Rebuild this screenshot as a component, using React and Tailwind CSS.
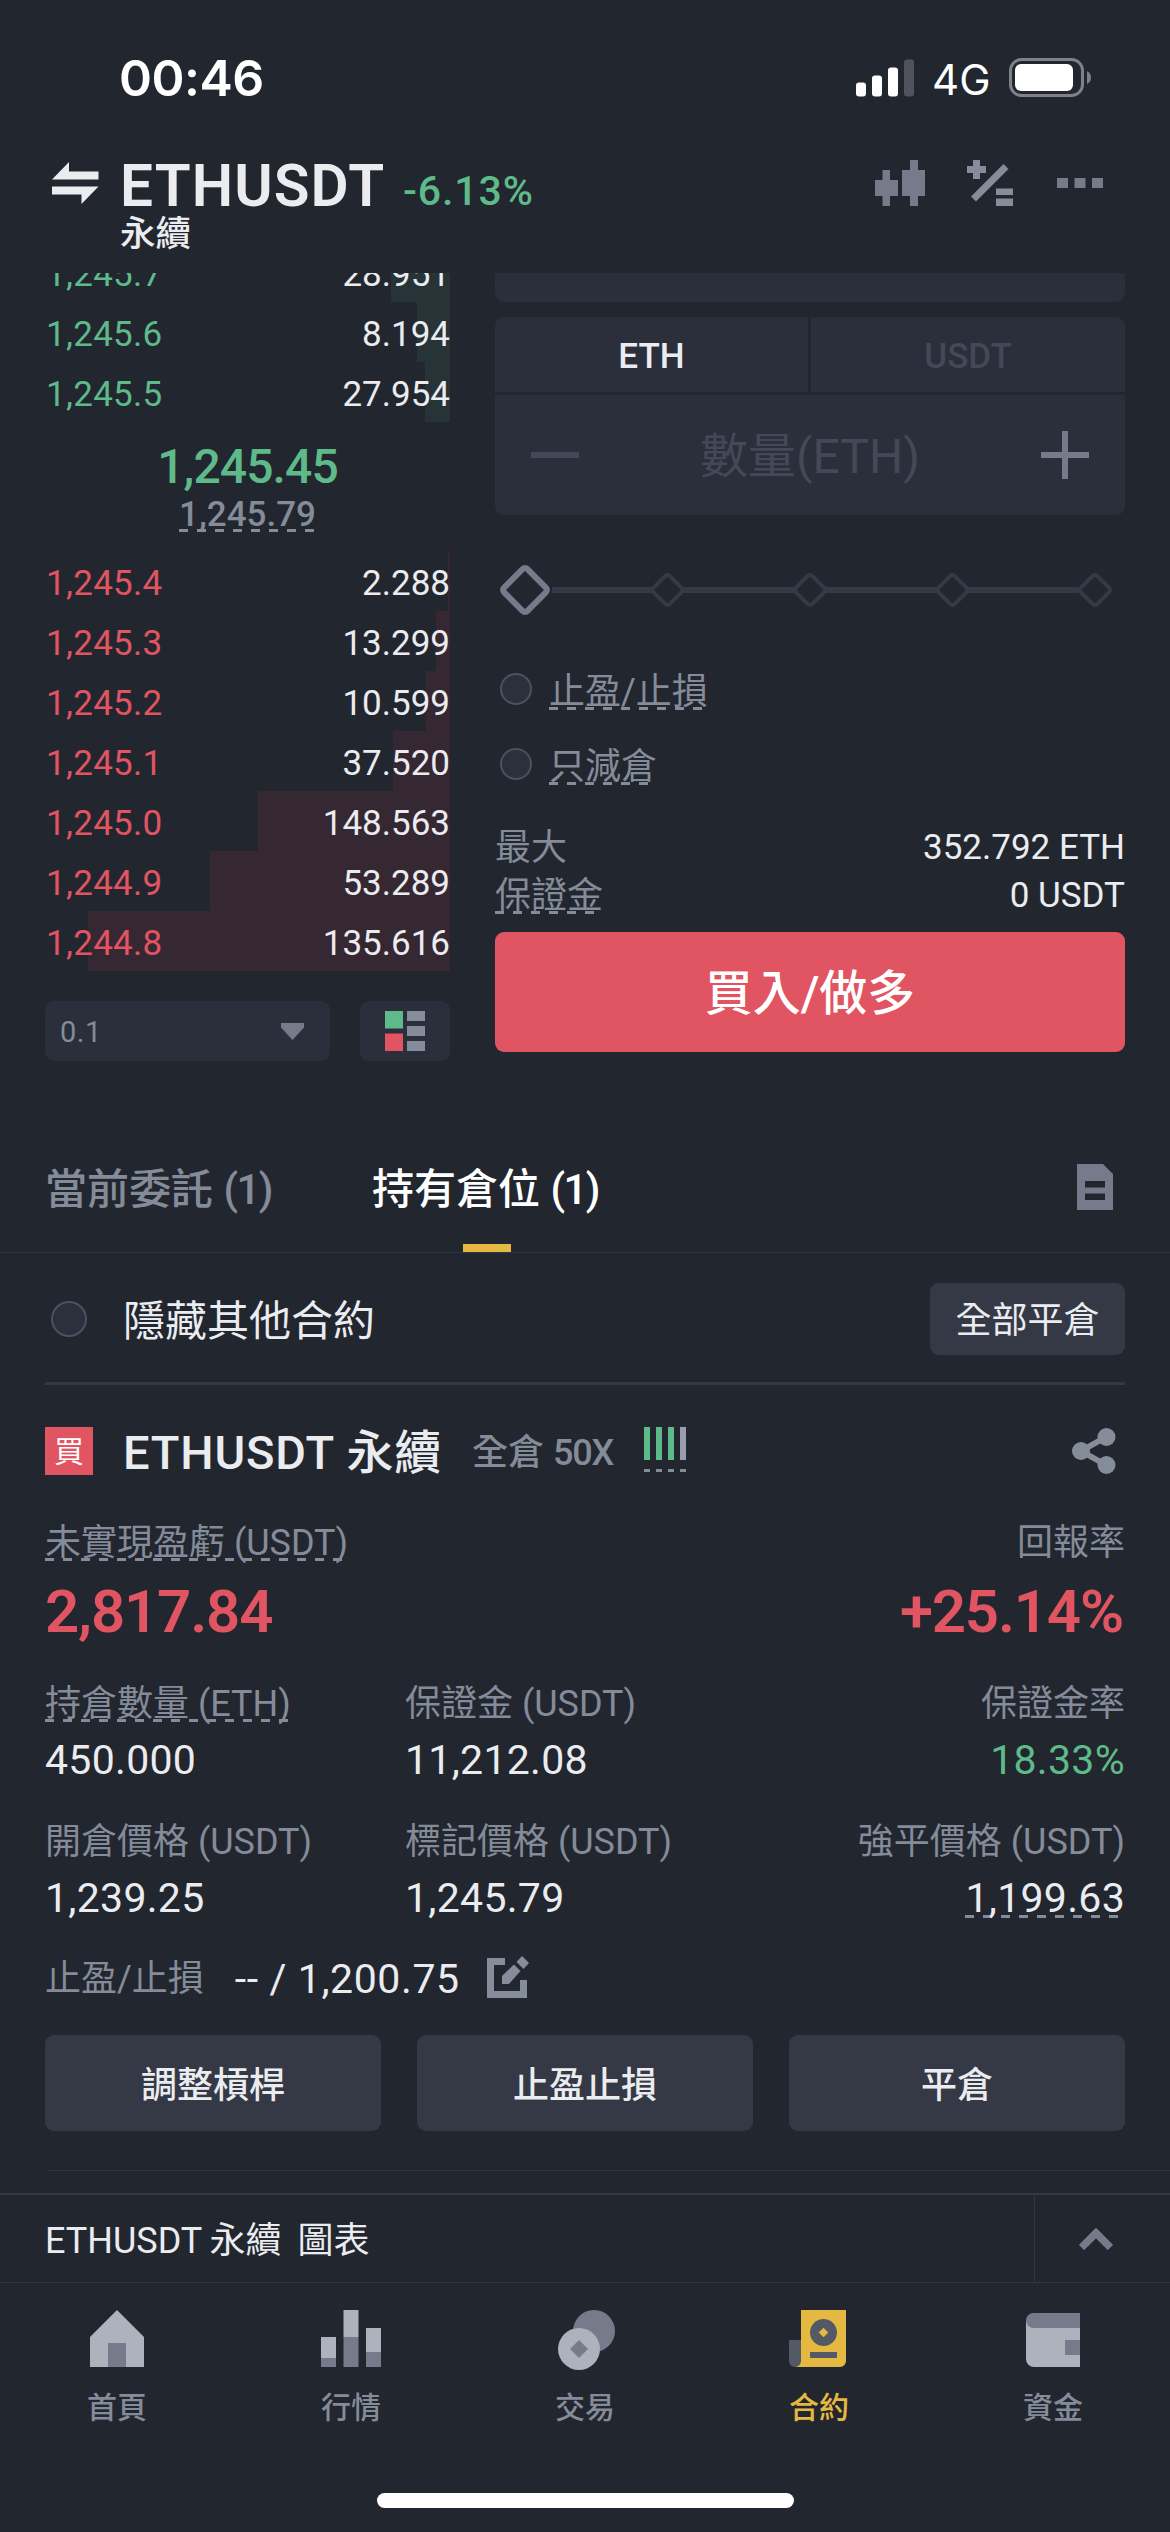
const BIDS = [
  { price: "1,245.7", amount: "28.951", depth: 59 },
  { price: "1,245.6", amount: "8.194", depth: 33 },
  { price: "1,245.5", amount: "27.954", depth: 25 },
];

const ASKS = [
  { price: "1,245.4", amount: "2.288", depth: 2 },
  { price: "1,245.3", amount: "13.299", depth: 14 },
  { price: "1,245.2", amount: "10.599", depth: 24 },
  { price: "1,245.1", amount: "37.520", depth: 57 },
  { price: "1,245.0", amount: "148.563", depth: 192 },
  { price: "1,244.9", amount: "53.289", depth: 240 },
  { price: "1,244.8", amount: "135.616", depth: 362 },
];

const NAV = [
  { label: "首頁", icon: HomeIcon },
  { label: "行情", icon: MarketIcon },
  { label: "交易", icon: TradeIcon },
  { label: "合約", icon: FuturesIcon, active: true },
  { label: "資金", icon: WalletIcon },
];

function HomeIcon() {
  return (
    <svg width="60" height="60" viewBox="0 0 60 60">
      <path d="M30 0L57 27V57H3V27Z" fill="#aeb2bc" />
      <path d="M21 33h18v24H21z" fill="#757b8a" />
    </svg>
  );
}

function MarketIcon() {
  return (
    <svg width="60" height="60" viewBox="0 0 60 60">
      <path d="M0 27h15v21H0zM22.5 0h15v27h-15zM45 18h15v24H45z" fill="#aeb2bc" />
      <path d="M0 48h15v9H0zM22.5 27h15v30h-15zM45 42h15v15H45z" fill="#757b8a" />
    </svg>
  );
}

function TradeIcon() {
  return (
    <svg width="60" height="60" viewBox="0 0 60 60">
      <circle cx="39" cy="21" r="21" fill="#757b8a" />
      <circle cx="24" cy="39" r="21" fill="#aeb2bc" />
      <path d="M24 30l9 9-9 9-9-9z" fill="#757b8a" />
    </svg>
  );
}

function FuturesIcon() {
  return (
    <svg width="60" height="60" viewBox="0 0 60 60">
      <path d="M12 0h45v51a6 6 0 0 1-6 6H6l6-6z" fill="#e5b941" />
      <path d="M0 30h12v21a6 6 0 0 1-12 0z" fill="#535965" />
      <circle cx="34.5" cy="22.5" r="13.5" fill="#535965" />
      <path d="M34.5 17.700l4.800 4.800-4.800 4.800-4.800-4.800z" fill="#e5b941" />
      <path d="M21 42h27v6H21z" fill="#535965" />
    </svg>
  );
}

function WalletIcon() {
  return (
    <svg width="60" height="60" viewBox="0 0 60 60">
      <path d="M3 10h54v47H11a8 8 0 0 1-8-8z" fill="#aeb2bc" />
      <path d="M10.5 3H57v15H10.5a7.5 7.5 0 0 1 0-15z" fill="#757b8a" />
      <path d="M42 30h15v15H42z" fill="#757b8a" />
    </svg>
  );
}

// text with the app's "tap for help" dashed underline
function Hint({ children, className = "leading-[36px]" }) {
  return (
    <span
      className={`inline-block bg-[repeating-linear-gradient(90deg,#848b99_0,#848b99_9px,transparent_9px,transparent_18px)] bg-[length:100%_3px] bg-bottom bg-no-repeat ${className}`}
    >
      {children}
    </span>
  );
}

function StatusBar() {
  return (
    <div className="h-[156px] flex items-start justify-between pl-[119px] pr-[78px] text-white">
      <span className="mt-[48px] h-[60px] leading-[60px] text-[50px] font-semibold tracking-[-0.5px] font-['Inter']">00:46</span>
      <div className="mt-[48px] h-[60px] flex items-center">
        <svg width="58" height="38" viewBox="0 0 58 38" fill="#fff">
          <rect x="0" y="23.5" width="10" height="14" rx="3" />
          <rect x="16" y="16.5" width="10" height="21" rx="3" />
          <rect x="32" y="8.5" width="10" height="29" rx="3" />
          <rect x="48" y="0.5" width="10" height="37" rx="3" fill="#50535b" />
        </svg>
        <span className="ml-[18px] w-[58px] text-[42px] leading-[60px] font-['Inter'] pt-[3px]">4G</span>
        <svg className="ml-[19px]" width="83" height="40" viewBox="0 0 83 40">
          <rect x="1.5" y="1.5" width="72" height="36" rx="11" fill="none" stroke="#7f8187" strokeWidth="3" />
          <rect x="6" y="6" width="58" height="27" rx="6" fill="#fff" />
          <path d="M78 13q4 2 4 6.5t-4 6.5z" fill="#7f8187" />
        </svg>
      </div>
    </div>
  );
}

function Header() {
  return (
    <header className="h-[117px] flex pl-[45px] pr-[67px] text-[#ebecf0]">
      <svg className="mt-[6px] ml-[7px]" width="47" height="42" viewBox="0 0 47 42" fill="#ebecf0">
        <path d="M17 0v9.5h29.5v8H0z" />
        <path d="M0 24.5h46.5L29.5 42v-9.5H0z" />
      </svg>
      <div className="ml-[21px] flex flex-col">
        <div className="flex">
          <span className="h-[60px] leading-[60px] w-[283px] text-[58.5px] font-semibold tracking-[1.1px]">ETHUSDT</span>
          <span className="pt-[9px] leading-[52px] text-[41px] font-medium tracking-[0.9px] text-[#5fba89]">-6.13%</span>
        </div>
        <span className="text-[35.5px] leading-[34px] font-medium">永續</span>
      </div>
      <div className="ml-auto mt-[4px] flex">
        <svg width="50" height="46" viewBox="0 0 50 46" fill="#757b8a">
          <path d="M0 20h7.5V10H15v10h8v16h-8v10H7.5V36H0z" />
          <path d="M27 10h8V0h8v10h7v26h-7v10h-8V36h-8z" />
        </svg>
        <svg className="ml-[42px]" width="46" height="46" viewBox="0 0 46 46" fill="#858c9a">
          <path d="M6 0h7v6h6v7h-6v6H6v-6H0V6h6z" />
          <path d="M36.5 4l5 5L9 41.500l-5-5z" />
          <path d="M29 28.5h17V35H29zM29 38.5h17V46H29z" />
        </svg>
        <svg className="mt-[18px] ml-[44px]" width="46" height="10" viewBox="0 0 46 10" fill="#757b8a">
          <path d="M0 0h11v10H0zM17.5 0h11v10h-11zM35 0h11v10H35z" />
        </svg>
      </div>
    </header>
  );
}

function BookRow({ row, side }) {
  return (
    <div className="h-[60px] shrink-0 grid">
      <div
        className={`col-start-1 row-start-1 justify-self-end ${side === "bid" ? "bg-[#263337]" : "bg-[#352833]"}`}
        style={{ width: row.depth }}
      />
      <div className="col-start-1 row-start-1 flex justify-between pt-[6px] leading-[54px] text-[35px]">
        <span className={`ml-px tracking-[0.3px] ${side === "bid" ? "text-[#5fba89]" : "text-[#e15461]"}`}>{row.price}</span>
        <span className="text-[#ebecf0]">{row.amount}</span>
      </div>
    </div>
  );
}

function OrderBook() {
  return (
    <div className="w-[405px]">
      <div className="h-[149px] overflow-hidden flex flex-col justify-end">
        {BIDS.map((row) => (
          <BookRow key={row.price} row={row} side="bid" />
        ))}
      </div>
      <div className="h-[129px] pt-[20px] flex flex-col items-center">
        <span className="h-[54px] leading-[50px] text-[48px] font-medium tracking-[-0.9px] text-[#5fba89]">1,245.45</span>
        <Hint className="leading-[37px] h-[36px] text-[35px] font-medium text-[#848b99]">1,245.79</Hint>
      </div>
      {ASKS.map((row) => (
        <BookRow key={row.price} row={row} side="ask" />
      ))}
      <div className="mt-[30px] flex justify-between">
        <div className="w-[285px] h-[60px] rounded-[9px] bg-[#2a2f3b] flex items-center justify-between pl-[15px] pr-[26px] text-[29px] tracking-[0.5px] text-[#848b99]">
          <span className="pt-[4px]">0.1</span>
          <svg width="23" height="17" viewBox="0 0 23 17">
            <path d="M0 0h23v4.5L11.5 17 0 4.5z" fill="#757b8a" />
          </svg>
        </div>
        <div className="w-[90px] h-[60px] rounded-[9px] bg-[#2a2f3b] flex items-center justify-center">
          <svg width="40" height="40" viewBox="0 0 40 40">
            <path d="M0 0h18v17.5H0z" fill="#5fba89" />
            <path d="M0 22.5h18V40H0z" fill="#e15461" />
            <path d="M22 0h18v10H22zM22 15h18v10H22zM22 30h18v10H22z" fill="#858c9a" />
          </svg>
        </div>
      </div>
    </div>
  );
}

function AmountSlider() {
  return (
    <svg className="mt-[45px]" width="630" height="60" viewBox="0 0 630 60">
      <path d="M57 30h526" stroke="#353a46" strokeWidth="6" />
      {[172.5, 315, 457.5, 600].map((x) => (
        <rect
          key={x}
          x={x - 11.5}
          y="18.5"
          width="23"
          height="23"
          rx="3"
          transform={`rotate(45 ${x} 30)`}
          fill="#22262f"
          stroke="#353a46"
          strokeWidth="4"
        />
      ))}
      <rect x="13.5" y="13.5" width="33" height="33" rx="3.5" transform="rotate(45 30 30)" fill="#22262f" stroke="#757b8a" strokeWidth="6" />
    </svg>
  );
}

function OrderForm() {
  return (
    <div className="w-[630px] text-[35px]">
      <div className="h-[29px] rounded-b-[9px] bg-[#2a2f3b]" />
      <div className="mt-[15px] rounded-[9px] overflow-hidden flex flex-col gap-[3px]">
        <div className="flex gap-[3px] h-[75px] leading-[80px] text-center font-medium">
          <div className="w-[313px] bg-[#2a2f3b] text-[#ebecf0]">ETH</div>
          <div className="flex-1 bg-[#2a2f3b] text-[#434957]">USDT</div>
        </div>
        <div className="h-[120px] bg-[#2a2f3b] flex items-center justify-between px-[36px]">
          <div className="w-[48px] h-[6px] bg-[#434957]" />
          <span className="text-[48px] leading-[60px] text-[#434957] pt-[3px]">數量(ETH)</span>
          <svg width="48" height="48" viewBox="0 0 48 48">
            <path d="M0 24h48M24 0v48" stroke="#757b8a" strokeWidth="6" />
          </svg>
        </div>
      </div>
      <AmountSlider />
      <div className="mt-[54px] flex flex-col gap-[39px] text-[36px] text-[#848b99]">
        {["止盈/止損", "只減倉"].map((label) => (
          <div key={label} className="flex items-start">
            <div className="size-[32px] -mt-px ml-[5px] mr-[17px] rounded-full bg-[#2b303c] border-2 border-[#4b5160]" />
            <Hint>{label}</Hint>
          </div>
        ))}
      </div>
      <div className="mt-[45px] flex justify-between leading-[36px] text-[#ebecf0]">
        <span className="text-[36px] text-[#848b99]">最大</span>
        <span>352.792 ETH</span>
      </div>
      <div className="mt-[12px] flex justify-between leading-[36px] text-[#ebecf0]">
        <span className="text-[36px] text-[#848b99]">
          <Hint>保證金</Hint>
        </span>
        <span>0 USDT</span>
      </div>
      <button className="mt-[18px] w-full h-[120px] rounded-[9px] bg-[#e15461] text-white text-[48px] font-medium pt-[3px]">
        買入/做多
      </button>
    </div>
  );
}

function Tabs() {
  return (
    <div className="mt-[72px] h-[129px] border-b border-[#303643] flex pl-[45px] pr-[57px] text-[42px] font-medium whitespace-nowrap">
      <div className="w-[327px] leading-[132px] text-[#848b99]">
        當前委託 <span className="tracking-[-1.5px]">(1)</span>
      </div>
      <div className="w-[230px] flex flex-col items-center text-white">
        <span className="w-full h-[120px] leading-[132px]">
          持有倉位 <span className="tracking-[-1.5px]">(1)</span>
        </span>
        <div className="w-[48px] h-[8px] bg-[#e5b941]" />
      </div>
      <svg className="ml-auto mt-[40px]" width="36" height="46" viewBox="0 0 36 46" fill="#757b8a">
        <path fillRule="evenodd" d="M0 0h26l10 10v36H0zM8 17v6.5h20V17zM8 29.5V36h20v-6.500z" />
      </svg>
    </div>
  );
}

function Stat({ label, value, hint, right, className = "" }) {
  return (
    <div className={`flex flex-col gap-[18px] ${right ? "items-end" : "items-start"}`}>
      <span className="h-[36px] leading-[36px] text-[36px] text-[#848b99]">
        {hint === "label" ? <Hint>{label}</Hint> : label}
      </span>
      <span className={`h-[40px] leading-[40px] text-[41px] tracking-[0.3px] ${className || "text-[#ebecf0]"}`}>
        {hint === "value" ? <Hint className="leading-[40px]">{value}</Hint> : value}
      </span>
    </div>
  );
}

function Position() {
  return (
    <div className="pl-[45px]">
      <div className="pr-[45px]">
        <div className="mt-[42px] h-[48px] flex items-center">
          <span className="size-[48px] bg-[#e15461] text-white text-[30px] leading-[50px] text-center">買</span>
          <span className="ml-[30px] w-[349px] text-[47px] font-medium tracking-[0.8px] text-[#ebecf0] leading-[48px] pt-[3px]">
            ETHUSDT 永續
          </span>
          <span className="w-[172px] text-[36px] font-medium text-[#848b99] leading-[48px] pt-[3px]">
            全倉 <span className="tracking-[-1.2px]">50X</span>
          </span>
          <svg width="42" height="48" viewBox="0 0 42 48">
            <path d="M0 0h6v33H0zM12 0h6v33h-6zM24 0h6v33h-6z" fill="#5fba89" />
            <path d="M36 0h6v33h-6z" fill="#989eb0" />
            <path d="M0 42h6v3H0zM12 42h6v3h-6zM24 42h6v3h-6zM36 42h6v3h-6z" fill="#848b99" />
          </svg>
          <svg className="ml-auto mr-[9px]" width="44" height="46" viewBox="0 0 44 46" fill="#858c9a">
            <path d="M9 23L34 9M9 23l25 14" stroke="#858c9a" strokeWidth="6" />
            <circle cx="9" cy="23" r="9" />
            <circle cx="34.5" cy="9" r="9" />
            <circle cx="34.5" cy="37" r="9" />
          </svg>
        </div>

        <div className="mt-[50px] flex justify-between text-[36px] leading-[36px] text-[#848b99]">
          <Hint>未實現盈虧 (USDT)</Hint>
          <span>回報率</span>
        </div>
        <div className="mt-[21px] flex justify-between text-[60px] leading-[60px] font-semibold tracking-[-1.2px] text-[#e15461]">
          <span>2,817.84</span>
          <span className="mr-[2px]">+25.14%</span>
        </div>

        <div className="mt-[44px] grid grid-cols-3 gap-y-[44px]">
          <Stat label="持倉數量 (ETH)" value="450.000" hint="label" />
          <Stat label="保證金 (USDT)" value="11,212.08" />
          <Stat label="保證金率" value="18.33%" right className="text-[#5fba89]" />
          <Stat label="開倉價格 (USDT)" value="1,239.25" />
          <Stat label="標記價格 (USDT)" value="1,245.79" />
          <Stat label="強平價格 (USDT)" value="1,199.63" hint="value" right />
        </div>

        <div className="mt-[41px] h-[40px] flex items-center leading-[40px]">
          <span className="text-[36px] text-[#848b99]">止盈/止損</span>
          <span className="ml-[31px] text-[41px] tracking-[0.6px] text-[#ebecf0]">-- / 1,200.75</span>
          <svg className="ml-[27px] mb-[4px]" width="43" height="42" viewBox="0 0 43 42" fill="#858c9a">
            <path d="M0 2h18v7H7v26h26V24h7v18H0z" />
            <path d="M15 28v-8L27 8.5l6.500 6.500L22 28z" />
            <path d="M29.5 6L35 0l7 7-5.500 6z" />
          </svg>
        </div>

        <div className="mt-[36px] grid grid-cols-3 gap-[36px]">
          {["調整槓桿", "止盈止損", "平倉"].map((label) => (
            <button key={label} className="h-[96px] rounded-[9px] bg-[#343945] text-[36px] font-medium text-[#ebecf0] pt-[5px]">
              {label}
            </button>
          ))}
        </div>
      </div>
      <div className="mt-[39px] ml-[3px] h-px bg-[#303743]" />
    </div>
  );
}

export default function App() {
  return (
    <main className="w-[1170px] h-[2532px] overflow-hidden bg-[#22262f] font-[Roboto,'Noto_Sans_CJK_TC',sans-serif]">
      <StatusBar />
      <Header />
      <div className="flex justify-between h-[779px] px-[45px]">
        <OrderBook />
        <OrderForm />
      </div>
      <Tabs />

      <div className="mx-[45px] h-[132px] border-b-[3px] border-[#343946] flex items-center pt-[3px]">
        <div className="size-[36px] ml-[6px] rounded-full bg-[#2b303c] border-2 border-[#4b5160]" />
        <span className="ml-[36px] text-[42px] leading-[60px] pt-[5px] text-[#ebecf0]">隱藏其他合約</span>
        <button className="ml-auto w-[195px] h-[72px] rounded-[9px] bg-[#343945] text-[36px] text-[#ebecf0] pt-[4px]">
          全部平倉
        </button>
      </div>

      <Position />

      <div className="mt-[22px] h-[90px] flex border-t-2 border-b border-t-[#343946] border-b-[#303743]">
        <span className="flex-1 pl-[45px] leading-[92px] text-[36px] text-[#ebecf0] whitespace-pre [word-spacing:-1px]">
          ETHUSDT 永續  圖表
        </span>
        <div className="w-[136px] border-l border-[#303743] flex items-center pl-[44px]">
          <svg width="34" height="22" viewBox="0 0 34 22">
            <path d="M2.5 19.5L17 5l14.5 14.5" fill="none" stroke="#757b8a" strokeWidth="7.5" />
          </svg>
        </div>
      </div>

      <nav className="grid grid-cols-5 pt-[27px]">
        {NAV.map(({ label, icon: Icon, active }) => (
          <div key={label} className={`flex flex-col items-center ${active ? "text-[#e5b941]" : "text-[#848b99]"}`}>
            <Icon />
            <span className="mt-[20px] text-[30px] leading-[36px] font-medium">{label}</span>
          </div>
        ))}
      </nav>
      <div className="mt-[67px] mx-auto w-[417px] h-[15px] rounded-full bg-white" />
    </main>
  );
}
